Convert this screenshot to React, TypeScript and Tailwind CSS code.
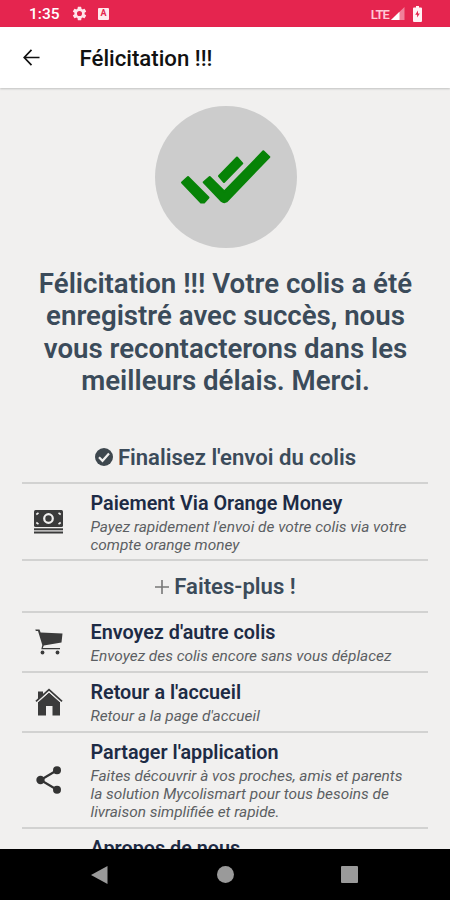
import * as React from 'react';

function StatusBar() {
  return (
    <div className="flex h-[27px] shrink-0 items-center bg-[#e5254f] text-white">
      <span className="ml-[29px] w-[31px] pt-[2px] text-[15.500px] leading-none font-medium">1:35</span>
      <svg className="ml-[11px] size-[17px]" viewBox="0 0 24 24" fill="#ffe4ea">
        <path d="M19.14 12.94a7.1 7.1 0 0 0 .06-.94c0-.32-.02-.64-.07-.94l2.03-1.58a.5.5 0 0 0 .12-.61l-1.92-3.32a.5.5 0 0 0-.59-.22l-2.39.96a7 7 0 0 0-1.62-.94l-.36-2.54a.48.48 0 0 0-.48-.41h-3.84a.48.48 0 0 0-.47.41l-.36 2.54c-.59.24-1.13.57-1.62.94l-2.39-.96a.5.5 0 0 0-.59.22L2.74 8.87a.5.5 0 0 0 .12.61l2.03 1.58a7 7 0 0 0 0 1.88l-2.03 1.58a.5.5 0 0 0-.12.61l1.92 3.32c.12.22.37.29.59.22l2.39-.96c.5.38 1.03.7 1.62.94l.36 2.54c.05.24.24.41.48.41h3.84c.24 0 .44-.17.47-.41l.36-2.54c.59-.24 1.13-.56 1.62-.94l2.39.96c.22.08.47 0 .59-.22l1.92-3.32a.5.5 0 0 0-.12-.61zM12 15.6a3.6 3.6 0 1 1 0-7.2 3.6 3.6 0 0 1 0 7.2z" />
      </svg>
      <span className="ml-[10px] flex h-3 w-[11px] items-center justify-center rounded-[1px] bg-[#ffe9ee] text-[9px] leading-none font-bold text-[#e5254f]">A</span>
      <span className="mr-[2px] ml-auto pt-px text-[13px] leading-none font-semibold tracking-[-0.900px] text-[#ffc9d5]">LTE</span>
      <svg className="h-[13px] w-[14px]" viewBox="0 0 14 13">
        <path d="M13.500 0v13H0z" fill="#f0809a" />
        <path d="M8.500 4.800V13H0z" fill="#fff" />
      </svg>
      <svg className="mr-[28px] ml-[8px] h-4 w-[9px]" viewBox="0 0 9 16">
        <path d="M3 0h3v1.500h2q1 0 1 1V15q0 1-1 1H1q-1 0-1-1V2.500q0-1 1-1h2z" fill="#fff2f4" />
        <path d="M5 4.500 2.200 8.800h1.900v2.700L6.800 7.500H5z" fill="#e5254f" />
      </svg>
    </div>
  );
}

function CashIcon() {
  return (
    <svg className="h-[24px] w-[29px]" viewBox="0 0 29 24" fill="#3b3b3b">
      <rect width="29" height="17" rx="1.500" />
      <circle cx="14.500" cy="8.500" r="4.300" fill="none" stroke="#f1f0ef" strokeWidth="2.200" />
      <path d="M2.300 4.500 4.500 2.800M24.500 2.800l2.200 1.700M2.300 12.500l2.200 1.700M24.500 14.200l2.200-1.700" fill="none" stroke="#f1f0ef" strokeWidth="1.600" />
      <rect y="18.300" width="29" height="2" />
      <rect y="21.500" width="29" height="2" />
    </svg>
  );
}

function CartIcon() {
  return (
    <svg className="h-[26px] w-[28px]" viewBox="0 0 28 26" fill="#3b3b3b">
      <path d="M.3.500h4.200L5.600 3.500 27.500 4.500 26.500 13.500 8.800 16.500 7.800 19H25v1.200H6.300L7.300 16 3 2H.8z" />
      <circle cx="7.500" cy="23.500" r="1.900" />
      <circle cx="22.500" cy="23.500" r="1.900" />
    </svg>
  );
}

function HomeIcon() {
  return (
    <svg className="h-[28px] w-[28px]" viewBox="0 0 28 28" fill="#3b3b3b">
      <path d="M14 4.500 25 14v13.500h-7.500v-9.500h-6.500v9.500H3V14z" />
      <path d="M1 13.300 14 1.700 27 13.300" fill="none" stroke="#3b3b3b" strokeWidth="1.800" />
      <path d="M3 3.500h5v3.500L3 11.500z" />
      <path d="M1.500 15.300 14 4.100 26.500 15.300" fill="none" stroke="#f1f0ef" strokeWidth=".8" />
    </svg>
  );
}

function ShareIcon() {
  return (
    <svg className="h-[28px] w-[26px]" viewBox="0 0 26 28" fill="#333">
      <path d="M21 4.300 4.500 14 21 23.700" fill="none" stroke="#333" strokeWidth="2.200" />
      <circle cx="21" cy="4.300" r="4" />
      <circle cx="4.500" cy="14" r="4.200" />
      <circle cx="21" cy="23.700" r="4" />
    </svg>
  );
}

function Item(props: { title: string; icon?: React.ReactNode; className: string; children?: React.ReactNode }) {
  return (
    <div className={'flex shrink-0 items-center border-b-2 border-[#d2d2d1] ' + props.className}>
      <div className="flex w-[53px] shrink-0 justify-center">{props.icon}</div>
      <div className="ml-[15.500px] self-start pt-[7px] whitespace-nowrap">
        <div className="text-[19.800px] leading-[26px] font-semibold text-[#1d2b45]">{props.title}</div>
        <div className="pt-[1px] text-[15.400px] leading-[18px] text-[#5c5f63] italic">{props.children}</div>
      </div>
    </div>
  );
}

export default function App() {
  return (
    <div className="flex h-[900px] w-[450px] flex-col overflow-hidden bg-[#f1f0ef] font-['Roboto',sans-serif]">
      <StatusBar />
      <header className="flex h-[61px] shrink-0 items-center bg-white shadow-[0_1px_2px_rgba(0,0,0,0.2)]">
        <svg className="ml-[23px] h-[17px] w-[17px]" viewBox="0 0 18 18" fill="none" stroke="#111" strokeWidth="1.800">
          <path d="M17.500 9H1.500M9 1 1.300 9 9 17" />
        </svg>
        <h1 className="ml-[39.500px] pt-[2px] text-[22.200px] font-medium text-[#111]">Félicitation !!!</h1>
      </header>

      <main className="flex min-h-0 flex-1 flex-col overflow-hidden pr-[22px] pl-[22px]">
        <div className="mt-[18px] ml-[133px] size-[142px] shrink-0 rounded-full bg-[#cccccc]">
          <svg className="size-full" viewBox="0 0 142 142" fill="#078307" stroke="#078307" strokeWidth="2" strokeLinejoin="round">
            <path d="M27 76.500 33 71 53.500 91.500 49 96.500H46z" />
            <path d="M82 51.500 87.300 57.300 69 76 64 70z" />
            <path d="M48.700 76.300 54.700 71 69.300 85.500 108.300 45.300 114.300 51 71.500 95.500Q69 97 66.500 95z" />
          </svg>
        </div>
        <p className="mt-[20px] shrink-0 pl-px text-center text-[27.650px] leading-[32.300px] font-semibold whitespace-nowrap text-[#3b4b5a]">
          Félicitation !!! Votre colis a été<br />
          enregistré avec succès, nous<br />
          vous recontacterons dans les<br />
          meilleurs délais. Merci.
        </p>

        <div className="mt-[35px] flex h-[52px] shrink-0 items-center justify-center border-b-2 border-[#d2d2d1] pl-px text-[22.100px] font-semibold text-[#3b4b5a]">
          <svg className="mr-[5px] size-[18px]" viewBox="0 0 18 18">
            <circle cx="9" cy="9" r="9" fill="#3e474e" />
            <path d="m4 9.300 3.500 3.500L14 5.500" fill="none" stroke="#f1f0ef" strokeWidth="2.200" />
          </svg>
          <span>Finalisez l'envoi du colis</span>
        </div>
        <Item title="Paiement Via Orange Money" icon={<CashIcon />} className="h-[77px]">
          Payez rapidement l'envoi de votre colis via votre<br />
          compte orange money
        </Item>
        <div className="flex h-[52px] shrink-0 items-center justify-center border-b-2 border-[#d2d2d1] pt-[1px] pl-px text-[22.100px] font-semibold text-[#3b4b5a]">
          <svg className="mr-[5px] size-[14px]" viewBox="0 0 14 14" stroke="#777" strokeWidth="1.600">
            <path d="M7 0v14M0 7h14" />
          </svg>
          <span>Faites-plus !</span>
        </div>
        <Item title="Envoyez d'autre colis" icon={<CartIcon />} className="h-[60px]">
          Envoyez des colis encore sans vous déplacez
        </Item>
        <Item title="Retour a l'accueil" icon={<HomeIcon />} className="h-[60px]">
          Retour a la page d'accueil
        </Item>
        <Item title="Partager l'application" icon={<ShareIcon />} className="h-[96px]">
          Faites découvrir à vos proches, amis et parents<br />
          la solution Mycolismart pour tous besoins de<br />
          livraison simplifiée et rapide.
        </Item>
        <Item title="Apropos de nous" className="h-[60px]" />
      </main>

      <nav className="flex h-[51px] shrink-0 items-center bg-black">
        <svg className="ml-[91px] h-[18px] w-[17px]" viewBox="0 0 17 18" fill="#9a9a9a">
          <path d="M16.500 0v18L0 9z" />
        </svg>
        <div className="ml-[109px] size-[17px] rounded-full bg-[#9a9a9a]" />
        <div className="ml-[107px] size-[17px] rounded-[1px] bg-[#9a9a9a]" />
      </nav>
    </div>
  );
}
